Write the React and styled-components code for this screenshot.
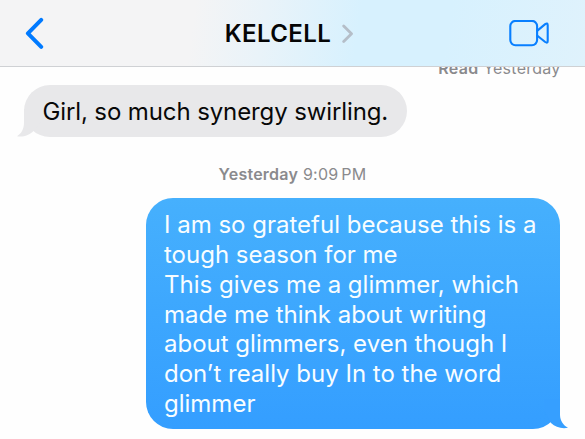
import React from "react";
import styled, { createGlobalStyle } from "styled-components";

const sentLines = [
  "I am so grateful because this is a",
  "tough season for me",
  "This gives me a glimmer, which",
  "made me think about writing",
  "about glimmers, even though I",
  "don’t really buy In to the word",
  "glimmer",
];

export default function App() {
  return (
    <>
      <GlobalStyle />
      <Screen>
        <Header>
          <BackButton aria-label="Back">
            <svg width="20" height="34" viewBox="0 0 20 34">
              <path d="M17.2 2.8 3.9 16.3l13.3 13.5" />
            </svg>
          </BackButton>
          <Contact>
            <ContactName>KELCELL</ContactName>
            <svg width="12" height="20" viewBox="0 0 12 20">
              <path d="M1.7 2l7.8 7.8-7.8 7.8" />
            </svg>
          </Contact>
          <VideoButton aria-label="Video call">
            <svg width="42" height="28" viewBox="0 0 42 28">
              <rect x="1.3" y="0.9" width="26.8" height="24.3" rx="5.2" />
              <path d="M28.4 10.6 36.2 4.1q2.5-1.7 2.5 1.1v15.7q0 2.8-2.5 1.1L28.4 15.7" />
            </svg>
          </VideoButton>
        </Header>

        <Thread>
          <Receipt>
            <b>Read</b> Yesterday
          </Receipt>
          <Bubble>
            <Line $spacing="-0.11px">Girl, so much synergy swirling.</Line>
            <Tail width="24" height="28" viewBox="0 0 24 28">
              <path d="M7 0V13.5C7 20 4.5 24.5 0 27.2C6 28.5 12.5 26 16.5 22L24 12V0Z" />
            </Tail>
          </Bubble>
          <Timestamp>
            <b>Yesterday</b> <Time>9:09 PM</Time>
          </Timestamp>
          <Bubble $sent>
            {sentLines.map((line) => (
              <Line key={line}>{line}</Line>
            ))}
            <Tail $sent width="24" height="30" viewBox="0 0 24 30">
              <path d="M16 0V16C16.2 22 19.5 26.5 24 28.8C17 30 11.5 28 7 24L0 12V0Z" />
            </Tail>
          </Bubble>
        </Thread>
      </Screen>
    </>
  );
}

const GlobalStyle = createGlobalStyle`
  body {
    margin: 0;
    background: #fff;
  }
`;

const Screen = styled.div`
  box-sizing: border-box;
  width: 585px;
  height: 439px;
  overflow: hidden;
  display: flex;
  flex-direction: column;
  background: #fefefe;
  font-family: Inter, "Liberation Sans", sans-serif;
`;

const Header = styled.header`
  box-sizing: border-box;
  flex: none;
  height: 67px;
  padding: 1px 34px 0 24px;
  display: grid;
  grid-template-columns: 100px 1fr 100px;
  align-items: center;
  border-bottom: 1px solid #cfd1d4;
  background: linear-gradient(
    98deg,
    #f4f4f5 0%,
    #f4f4f5 33%,
    #e9f3f9 45%,
    #d7f1fe 61%,
    #d7f1fe 76%,
    #dff2fc 100%
  );
`;

const BackButton = styled.button`
  border: 0;
  padding: 0;
  background: none;
  display: flex;

  path {
    fill: none;
    stroke: #007aff;
    stroke-width: 4;
    stroke-linecap: round;
    stroke-linejoin: round;
  }
`;

const Contact = styled.div`
  display: flex;
  align-items: center;
  justify-content: center;
  gap: 11px;
  padding-left: 4px;

  path {
    fill: none;
    stroke: #b5bec8;
    stroke-width: 2.8;
    stroke-linecap: round;
    stroke-linejoin: round;
  }
`;

const ContactName = styled.h1`
  margin: 0;
  font-size: 24px;
  font-weight: 600;
  letter-spacing: 0.4px;
  color: #050505;
`;

const VideoButton = styled(BackButton)`
  justify-content: flex-end;

  rect,
  path {
    fill: none;
    stroke: #087fff;
    stroke-width: 2.1;
  }
`;

const Thread = styled.main`
  flex: 1;
  min-height: 0;
  overflow: hidden;
  display: flex;
  flex-direction: column;
`;

const Receipt = styled.div`
  flex: none;
  align-self: flex-end;
  height: 27px;
  margin: -9px 24.5px 0 0;
  line-height: 20px;
  font-size: 16px;
  letter-spacing: 0.25px;
  color: #8a8a8d;
  white-space: nowrap;

  b {
    font-weight: 600;
  }
`;

const Bubble = styled.div`
  position: relative;
  box-sizing: border-box;
  flex: none;
  align-self: ${({ $sent }) => ($sent ? "flex-end" : "flex-start")};
  width: ${({ $sent }) => ($sent ? "414px" : "383px")};
  height: ${({ $sent }) => ($sent ? "231px" : "52px")};
  margin: ${({ $sent }) => ($sent ? "0 25px 0 0" : "0 0 0 24px")};
  padding: ${({ $sent }) => ($sent ? "12px 18px" : "12px 18.4px")};
  border-radius: ${({ $sent }) => ($sent ? "27px" : "26px")};
  color: ${({ $sent }) => ($sent ? "#f8fdff" : "#080808")};
  background: ${({ $sent }) =>
    $sent ? "linear-gradient(#46b0fd, #349eff)" : "#e8e8ea"};
`;

const Line = styled.div`
  height: 29.85px;
  line-height: 29.85px;
  font-size: 24px;
  white-space: nowrap;
  letter-spacing: ${({ $spacing }) => $spacing || "normal"};
`;

const Tail = styled.svg`
  position: absolute;
  bottom: 0;
  ${({ $sent }) => ($sent ? "right: -8px" : "left: -7px")};
  fill: ${({ $sent }) => ($sent ? "#369fff" : "#e8e8ea")};
`;

const Timestamp = styled.div`
  flex: none;
  height: 61px;
  line-height: 74px;
  text-align: center;
  font-size: 16px;
  letter-spacing: 0.25px;
  color: #8a8a8d;

  b {
    font-weight: 600;
  }
`;

const Time = styled.span`
  word-spacing: -2px;
`;
